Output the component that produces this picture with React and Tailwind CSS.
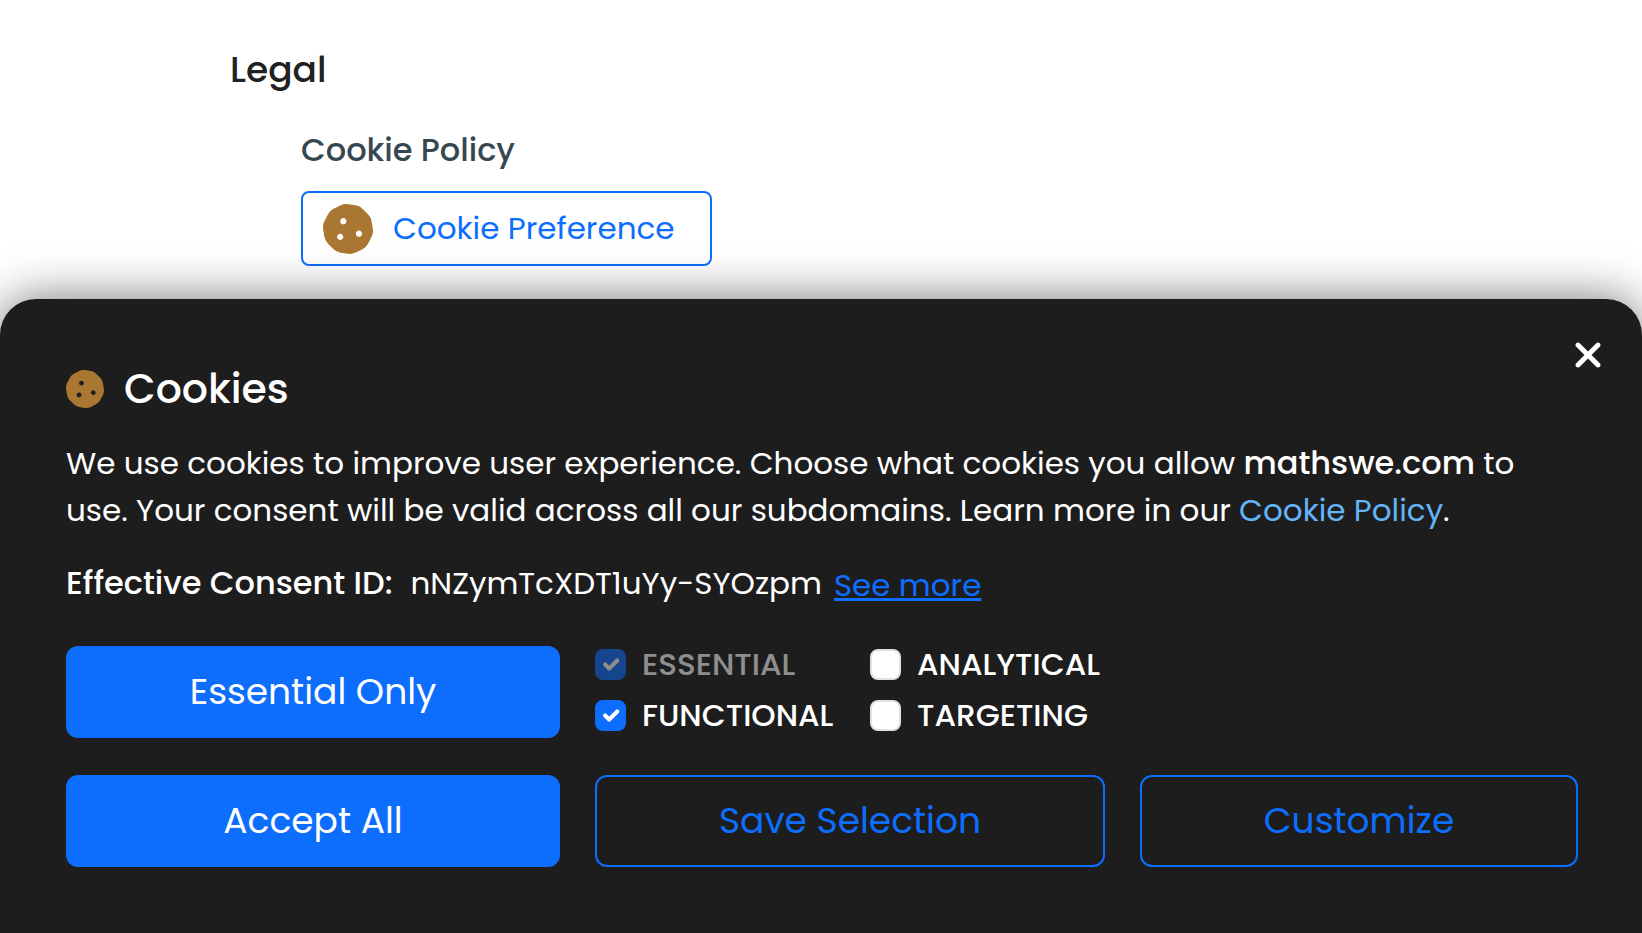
import { FaCookie } from "react-icons/fa";
import { FaXmark } from "react-icons/fa6";

const options = [
  { id: "essential", label: "ESSENTIAL", checked: true, disabled: true },
  { id: "analytical", label: "ANALYTICAL", checked: false, disabled: false },
  { id: "functional", label: "FUNCTIONAL", checked: true, disabled: false },
  { id: "targeting", label: "TARGETING", checked: false, disabled: false },
];

function ConsentOption({ id, label, checked, disabled }) {
  return (
    <div className={disabled ? "flex items-center gap-4 opacity-50" : "flex items-center gap-4"}>
      <span className="grid size-[31px] shrink-0 place-items-center">
        <input
          id={id}
          type="checkbox"
          defaultChecked={checked}
          disabled={disabled}
          className="peer col-start-1 row-start-1 size-[31px] appearance-none rounded-lg border-2 border-[#dee2e6] bg-white checked:border-[#0d6efd] checked:bg-[#0d6efd]"
        />
        <svg
          viewBox="0 0 20 20"
          className="pointer-events-none col-start-1 row-start-1 hidden size-[27px] peer-checked:block"
          fill="none"
          stroke="#fff"
          strokeWidth="3"
          strokeLinecap="round"
          strokeLinejoin="round"
          aria-hidden="true"
        >
          <path d="m6 10 3 3 6-6" />
        </svg>
      </span>
      <label htmlFor={id} className="text-[31px] leading-[31px] font-medium">
        {label}
      </label>
    </div>
  );
}

function ActionButton({ outline, children }) {
  return (
    <button
      type="button"
      className={
        outline
          ? "h-[92px] w-full rounded-xl border-2 border-[#0d6efd] text-4xl text-[#0d6efd]"
          : "h-[92px] w-full rounded-xl border-2 border-[#0d6efd] bg-[#0d6efd] text-4xl text-white"
      }
    >
      {children}
    </button>
  );
}

export default function App() {
  return (
    <div className="flex min-h-screen flex-col overflow-hidden bg-white font-[Poppins,Inter,sans-serif]">
      <main className="flex flex-col items-start pt-12 pb-[33px] pl-[230px]">
        <h2 className="text-4xl leading-[44px] font-medium text-[#212121]">Legal</h2>
        <div className="flex flex-col items-start pt-9 pl-[71px]">
          <a href="#cookie-policy" className="text-[32px] leading-[44px] font-medium text-[#37474f]">
            Cookie Policy
          </a>
          <button
            type="button"
            className="mt-[19px] flex h-[75px] items-center gap-5 rounded-lg border-2 border-[#0d6efd] pr-[35px] pl-5 text-[31px] text-[#0d6efd]"
          >
            <FaCookie className="size-[50px] text-[#a97731]" aria-hidden="true" />
            Cookie Preference
          </button>
        </div>
      </main>

      <section
        aria-labelledby="cookies-title"
        className="relative flex-1 rounded-t-[36px] bg-[#1d1d1d] pt-16 pr-16 pb-[65px] pl-[66px] text-white shadow-[0_0_48px_rgba(0,0,0,0.55)]"
      >
        <button type="button" aria-label="Close" className="absolute top-8 right-[30px] grid size-12 place-items-center">
          <FaXmark className="size-10" aria-hidden="true" />
        </button>

        <h1 id="cookies-title" className="flex items-center gap-5 text-[41px] leading-[52px] font-medium">
          <FaCookie className="size-[38px] text-[#a97731]" aria-hidden="true" />
          Cookies
        </h1>

        <p className="mt-6 text-[31px] leading-[47px]">
          We use cookies to improve user experience. Choose what cookies you allow{" "}
          <strong className="text-[32px] font-medium">mathswe.com</strong> to use. Your consent will be valid across
          all our subdomains. Learn more in our{" "}
          <a href="#cookie-policy" className="text-[#64b5f6]">
            Cookie Policy
          </a>
          .
        </p>

        <div className="mt-[23px] flex items-start gap-3 text-[31px] leading-[51px]">
          <span className="flex items-baseline gap-[18px]">
            <strong className="text-[32px] font-medium">Effective Consent ID:</strong>
            <span>nNZymTcXDT1uYy-SYOzpm</span>
          </span>
          <button type="button" className="pt-[3px] text-[#0d6efd] underline">
            See more
          </button>
        </div>

        <div className="mt-[35px] grid grid-cols-[494fr_510fr_438fr] gap-x-[35px] gap-y-[37px]">
          <ActionButton>Essential Only</ActionButton>
          <fieldset
            aria-label="Cookie categories"
            className="grid grid-cols-[275px_auto] content-start justify-start gap-y-5 pt-[3px]"
          >
            {options.map((option) => (
              <ConsentOption key={option.id} {...option} />
            ))}
          </fieldset>
          <div className="col-start-1">
            <ActionButton>Accept All</ActionButton>
          </div>
          <ActionButton outline>Save Selection</ActionButton>
          <ActionButton outline>Customize</ActionButton>
        </div>
      </section>
    </div>
  );
}
